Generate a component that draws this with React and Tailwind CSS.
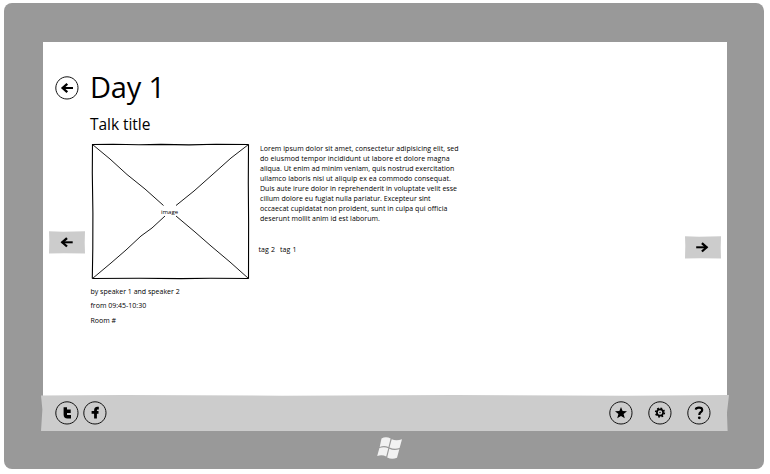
const BODY = [
  ['Lorem ipsum dolor sit amet, consectetur adipisicing elit, sed', 'tracking-[0.05px]'],
  ['do eiusmod tempor incididunt ut labore et dolore magna', 'tracking-[0.07px]'],
  ['aliqua. Ut enim ad minim veniam, quis nostrud exercitation', 'tracking-[0.02px]'],
  ['ullamco laboris nisi ut aliquip ex ea commodo consequat.', 'tracking-[0.07px]'],
  ['Duis aute irure dolor in reprehenderit in voluptate velit esse', 'tracking-[0.03px]'],
  ['cillum dolore eu fugiat nulla pariatur. Excepteur sint', 'tracking-[0.03px]'],
  ['occaecat cupidatat non proident, sunt in culpa qui officia', 'tracking-[0.05px]'],
  ['deserunt mollit anim id est laborum.', 'tracking-[0.03px]'],
];

function Arrow({ right = false }) {
  return (
    <g transform={right ? 'translate(24 0) scale(-1 1)' : undefined} fill="none" stroke="#000">
      <path d="M7 12H18" strokeWidth="2" />
      <path d="M12.3 7.8L7.6 12L12.3 16.200" strokeWidth="2.3" />
    </g>
  );
}

function Round({ children, className = '' }) {
  return (
    <svg className={`block h-6 w-6 shrink-0 ${className}`} viewBox="0 0 24 24">
      <path
        d="M12 .8C18 .8 23 5.5 23 11.8C23 18.3 18.2 23 12 23C5.7 23 .8 18.2 .8 12C.8 5.8 5.8 .8 12 .8Z"
        fill="none"
        stroke="#111"
        strokeWidth="1"
      />
      {children}
    </svg>
  );
}

function PageButton({ right = false }) {
  return (
    <svg className="block h-[23px] w-9" viewBox="0 0 36 23">
      <path d="M0 .3L14 .8L36 .3L35.700 12L36 22.500L15 22.300L0 22.600L.3 10Z" fill="#ccc" />
      <g transform={right ? 'translate(5.2 -.7)' : 'translate(5.700 -.7)'}>
        <Arrow right={right} />
      </g>
    </svg>
  );
}

function ImagePlaceholder() {
  return (
    <svg className="block h-[137px] w-[160px]" viewBox="0 0 160 137" fill="none" stroke="#000">
      <g strokeWidth="1.1">
        <path d="M1 1.5L22 1.300L48 1.800L70 1.400L98 1.900L125 1.300L157.500 1.500" />
        <path d="M157.500 1.500L157.300 40L157.600 80L157.500 135.500" />
        <path d="M157.500 135.500L120 135.200L90 135.600L48 135.300L1.500 135.500" />
        <path d="M1.500 1L1.300 30L1.900 70L1.800 105L1.300 135.500" />
      </g>
      <g strokeWidth=".9">
        <path d="M1.500 1.500L19 16L36 31.500L54 46L72.500 62.500" />
        <path d="M157.500 1.500L140 15L121 32L103 48L85 62.500" />
        <path d="M1.500 135.500L20 120L35 107L50 93L61 85L74 73" />
        <path d="M85 73L104 89L120 103L139 119L157.500 135.500" />
      </g>
      <text x="78.500" y="70.500" textAnchor="middle" fill="#000" stroke="none" className="text-[6px]">
        image
      </text>
    </svg>
  );
}

export default function App() {
  return (
    <div className="h-[474px] w-[770px] bg-white pl-1 pt-[3px] font-['Open_Sans','Noto_Sans',sans-serif] text-black">
      <div className="flex h-[466px] w-[760px] flex-col rounded-[8px] bg-[#999] pl-[39px] pt-[39px]">
        <div className="flex h-[389px] w-[684px] flex-col bg-white">
          <main className="flex h-[353px]">
            <nav className="flex w-12 shrink-0 flex-col pt-[34px]">
              <Round className="ml-[11.500px]">
                <Arrow />
              </Round>
              <div className="ml-[6px] mt-[131px]">
                <PageButton />
              </div>
            </nav>
            <article className="w-[594px] shrink-0 pt-[24px]">
              <h1 className="-ml-px h-[42px] whitespace-nowrap text-[29px] leading-[42px] tracking-[-0.2px]">Day 1</h1>
              <h2 className="-ml-px mt-[5px] h-[22px] whitespace-nowrap text-[15.500px] leading-[22px] tracking-[-0.050px]">Talk title</h2>
              <div className="mt-[8px] flex">
                <ImagePlaceholder />
                <div className="ml-[9px] whitespace-nowrap text-[7px] leading-[10px]">
                  <div className="mt-[1px]">
                    {BODY.map(([line, tracking]) => (
                      <p key={line} className={tracking}>{line}</p>
                    ))}
                  </div>
                  <div className="-ml-[1.500px] mt-[21px] flex gap-[5px] tracking-[0.1px]">
                    <span>tag 2</span>
                    <span>tag 1</span>
                  </div>
                </div>
              </div>
              <div className="-ml-[0.500px] mt-[5px] whitespace-nowrap text-[7px] leading-[14.500px]">
                <p>by speaker 1 and speaker 2</p>
                <p className="-mt-[0.500px]">from 09:45-10:30</p>
                <p className="mt-[0.500px]">Room #</p>
              </div>
            </article>
            <nav className="pt-[194px]">
              <PageButton right />
            </nav>
          </main>
          <footer className="-ml-0.5 flex h-9 w-[688px] shrink-0 items-center bg-[#ccc] px-[14px] [clip-path:polygon(0_0.500px,12%_0,35%_0.700px,60%_0,85%_0.700px,100%_0,99.7%_50%,99.8%_100%,0_100%,0.2%_40%)]">
            <Round className="-ml-[0.500px]">
              <path d="M10.300 6.300V13.500Q10.300 15.800 12.500 15.800H16M9 10.200H15.700" fill="none" stroke="#000" strokeWidth="3.400" />
            </Round>
            <Round className="ml-[4.500px]">
              <path d="M15.800 7.200H14.500Q12.500 7.200 12.500 9.500V17.500M8.600 11.300H15.500" fill="none" stroke="#000" strokeWidth="2.800" />
            </Round>
            <Round className="ml-auto">
              <path d="M12 6L13.600 10.100L18 10.300L14.600 13L15.800 17.300L12 14.900L8.200 17.300L9.400 13L6 10.300L10.400 10.100Z" fill="#000" />
            </Round>
            <Round className="ml-[15px]">
              <circle cx="12" cy="11.500" r="3.100" fill="none" stroke="#000" strokeWidth="1.700" />
              <circle cx="12" cy="11.500" r="4.300" fill="none" stroke="#000" strokeWidth="1.700" strokeDasharray="1.700 1.677" />
              <circle cx="12" cy="11.500" r=".7" fill="#000" />
            </Round>
            <Round className="ml-[15px] mr-[4.500px]">
              <path d="M8.800 8.600Q9 6.700 12 6.700Q15.200 6.700 15.200 9Q15.200 10.300 13.600 11.300Q12.300 12.100 12.300 14" fill="none" stroke="#000" strokeWidth="2.200" />
              <circle cx="12.300" cy="16.800" r="1.400" fill="#000" />
            </Round>
          </footer>
        </div>
        <svg className="ml-[334px] mt-[5px] block h-6 w-[26px]" viewBox="0 0 26 24" fill="#f2f2f2">
          <path d="M4.500 2.500Q9 .2 13.600 2.600L11.500 11Q7 9 2.700 11Z" />
          <path d="M14.700 3.200Q19 5.300 25 3.300L22.600 12Q17.500 13.800 12.500 11.500Z" />
          <path d="M2.400 12.100Q7 10.200 11.300 12.200L9.200 20.500Q5 18.300 .2 20Z" />
          <path d="M12.300 12.800Q17 15 22.300 13.200L20 21.700Q15 24 10.200 21.400Z" />
        </svg>
      </div>
    </div>
  );
}
